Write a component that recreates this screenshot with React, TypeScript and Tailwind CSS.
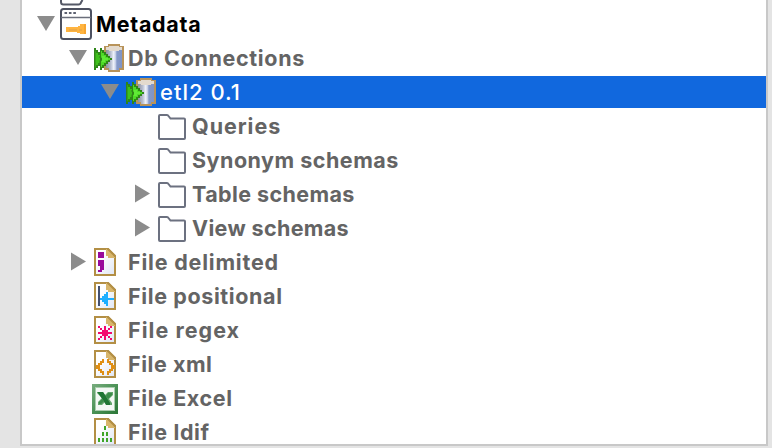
import type { ReactNode } from "react";

type Arrow = "down" | "right" | null;

function Twisty({ dir }: { dir: Arrow }) {
  return (
    <svg className="h-8 w-7 shrink-0" viewBox="0 0 28 32">
      {dir === "down" && <path d="M5 8h18l-9 15z" fill="#8c8c8c" />}
      {dir === "right" && <path d="M7 6.500v18l15-9z" fill="#8c8c8c" />}
    </svg>
  );
}

function Icon({ children }: { children: ReactNode }) {
  return (
    <svg className="h-8 w-8 shrink-0" viewBox="0 0 32 32">
      {children}
    </svg>
  );
}

function MetadataIcon() {
  return (
    <Icon>
      <rect x="1" y="1" width="30" height="30" rx="2.5" fill="#fff" stroke="#4d5160" strokeWidth="2" />
      <path d="M1 9.500h30" stroke="#6a6e7b" strokeWidth="1.5" />
      <path d="M4.500 5h12" stroke="#5d6170" strokeWidth="2" strokeDasharray="2.6 1.8" />
      <path d="M6 19h12v-1h2v-2h6v10h-6v-1h-3v-1H6z" fill="#ffb440" />
      <path d="M9 22h8M19 22h3" stroke="#dda04a" strokeWidth="1" />
      <path d="M25 16v10" stroke="#f7a530" strokeWidth="2" />
    </Icon>
  );
}

function DbIcon() {
  return (
    <Icon>
      <defs>
        <linearGradient id="cyl" x1="0" x2="1">
          <stop offset="0" stopColor="#8b8f9c" />
          <stop offset="0.3" stopColor="#b9c0d2" />
          <stop offset="0.48" stopColor="#f0f3fa" />
          <stop offset="0.6" stopColor="#c3cde6" />
          <stop offset="0.68" stopColor="#8599c8" />
          <stop offset="1" stopColor="#8094c4" />
        </linearGradient>
      </defs>
      <path d="M12 4h4V2h12v2h4v24h-4v2H16v-2h-4z" fill="#b8935a" />
      <path d="M14 7h16v19h-3v2H17v-2h-3z" fill="url(#cyl)" />
      <path d="M14 5h3V4h10v1h3v3h-3v1H17V8h-3z" fill="#e3dace" />
      <path
        d="M2 6h2v2h2v2h2V6h2v2h2v2h2v2h2v2h2v2h2v2h-2v2h-2v2h-2v2h-2v2h-2v2H8v-4H6v2H4v2H2z"
        fill="#2f8618"
      />
      <path d="M3.500 9H4v2h2v2h2v8H6v2H4v2h-.5z" fill="#3fc01c" />
      <path d="M9 9h1v2h2v2h2v2h2v1h2v2h-2v1h-2v2h-2v2h-2v2H9z" fill="#4edb26" />
      <path d="M8 14v2h1.500v2.500H8V21" fill="none" stroke="#2f8618" strokeWidth="1" />
      <path d="M10 14h3v2h3v2h-3v2h-3z" fill="#60ea36" />
    </Icon>
  );
}

function FolderIcon() {
  return (
    <Icon>
      <path d="M3 6q0-1 1-1h7q1 0 1.500 1l2 2.500H28q1 0 1 1V28q0 1-1 1H4q-1 0-1-1z" fill="#fff" stroke="#6c7180" strokeWidth="2" />
    </Icon>
  );
}

function Doc({ children }: { children: ReactNode }) {
  return (
    <Icon>
      <defs>
        <linearGradient id="paper" x1="0" y1="0" x2="1" y2="1">
          <stop offset="0.3" stopColor="#fff" />
          <stop offset="1" stopColor="#dfe6f5" />
        </linearGradient>
      </defs>
      <path d="M3 3h13l7 7v19H3z" fill="url(#paper)" stroke="#b38f45" strokeWidth="2" />
      <path d="M14 3h2l7 7v2h-7v-2h-2z" fill="#d8b66c" />
      <path d="M15 3h1l7 7v1" fill="none" stroke="#b38f45" strokeWidth="2" />
      {children}
    </Icon>
  );
}

function DelimitedIcon() {
  return (
    <Doc>
      <path d="M6 6h6v6H6zM6 14h6v10h-2v2H6v-2h2v-4H6z" fill="#990b9b" />
    </Doc>
  );
}

function PositionalIcon() {
  return (
    <Doc>
      <path d="M6 6h2v20H6z" fill="#44506e" />
      <path d="M8 18h2v-2h2v-2h2v-2h2v6h6v2h-6v6h-2v-2h-2v-2h-2v-2H8z" fill="#1eafff" />
    </Doc>
  );
}

function RegexIcon() {
  return (
    <Doc>
      <path
        d="M12 12h2v4h2v2h4v2h-4v2h-2v4h-2v-4h-2v-2H6v-2h4v-2h2zM6 12h2v2H6zM8 14h2v2H8zM18 12h2v2h-2zM16 14h2v2h-2zM6 24h2v2H6zM8 22h2v2H8zM16 22h2v2h-2zM18 24h2v2h-2z"
        fill="#f3086e"
      />
      <path d="M10 16h6v6h-6z" fill="#f3086e" />
    </Doc>
  );
}

function XmlIcon() {
  return (
    <Doc>
      <path
        d="M12 12h-1v2H9v2H7v2H5v2h2v2h2v2h2v2h1M15 12h1v2h2v2h2v2h2v2h-2v2h-2v2h-2v2h-1"
        fill="none"
        stroke="#e08f14"
        strokeWidth="2"
      />
    </Doc>
  );
}

function ExcelIcon() {
  return (
    <Icon>
      <defs>
        <linearGradient id="xlsFrame" x1="0" y1="0" x2="1" y2="1">
          <stop offset="0" stopColor="#79ad7f" />
          <stop offset="0.5" stopColor="#4b9256" />
          <stop offset="1" stopColor="#2b7637" />
        </linearGradient>
      </defs>
      <rect x="0" y="2" width="26" height="30" fill="url(#xlsFrame)" />
      <rect x="3" y="5" width="20" height="24" fill="#a9ccad" />
      <rect x="4" y="6" width="18" height="22" fill="#f4f8f5" />
      <path d="M5 10h6l2 3 3-3h5v3l-4 4 3 4v2h-5l-2-3-3 3H6v-3l4-4-5-5z" fill="#62a56b" />
      <path d="M6 10h5l2 3 5 8v2h-4l-3-5-5-7z" fill="#207534" />
      <path d="M16 11h4v2l-4 4-2-3zM7 20l3-3 2 2-3 3H7z" fill="#3c8c4a" />
    </Icon>
  );
}

function LdifIcon() {
  return (
    <Doc>
      <path
        d="M12 10h2v4h-2zM10 16h2v4h-2zM14 16h2v4h-2zM6 22h2v4H6zM10 22h2v4h-2zM14 22h2v4h-2zM18 22h2v4h-2z"
        fill="#3fa528"
      />
    </Doc>
  );
}

interface Node {
  label: string;
  icon: ReactNode;
  arrow: Arrow;
  indent: string;
  text: string;
  selected?: boolean;
}

const nodes: Node[] = [
  { label: "Metadata", icon: <MetadataIcon />, arrow: "down", indent: "pl-[10px]", text: "text-[21.5px] font-bold text-black tracking-[0.7px]" },
  { label: "Db Connections", icon: <DbIcon />, arrow: "down", indent: "pl-[42px]", text: "text-[21.5px] font-bold text-[#646464] tracking-[0.65px]" },
  { label: "etl2 0.1", icon: <DbIcon />, arrow: "down", indent: "pl-[74px]", text: "text-[22px] font-medium text-white tracking-[1px]", selected: true },
  { label: "Queries", icon: <FolderIcon />, arrow: null, indent: "pl-[106px]", text: "text-[21.5px] font-bold text-[#646464] tracking-[0.95px]" },
  { label: "Synonym schemas", icon: <FolderIcon />, arrow: null, indent: "pl-[106px]", text: "text-[21.5px] font-bold text-[#646464] tracking-[0.5px]" },
  { label: "Table schemas", icon: <FolderIcon />, arrow: "right", indent: "pl-[106px]", text: "text-[21.5px] font-bold text-[#646464] tracking-[0.4px]" },
  { label: "View schemas", icon: <FolderIcon />, arrow: "right", indent: "pl-[106px]", text: "text-[21.5px] font-bold text-[#646464] tracking-[0.35px]" },
  { label: "File delimited", icon: <DelimitedIcon />, arrow: "right", indent: "pl-[42px]", text: "text-[21.5px] font-bold text-[#646464] tracking-[0.8px]" },
  { label: "File positional", icon: <PositionalIcon />, arrow: null, indent: "pl-[42px]", text: "text-[21.5px] font-bold text-[#646464] tracking-[0.62px]" },
  { label: "File regex", icon: <RegexIcon />, arrow: null, indent: "pl-[42px]", text: "text-[21.5px] font-bold text-[#646464] tracking-[1.05px]" },
  { label: "File xml", icon: <XmlIcon />, arrow: null, indent: "pl-[42px]", text: "text-[21.5px] font-bold text-[#646464] tracking-[0.55px]" },
  { label: "File Excel", icon: <ExcelIcon />, arrow: null, indent: "pl-[42px]", text: "text-[21.5px] font-bold text-[#646464] tracking-[0.6px]" },
  { label: "File ldif", icon: <LdifIcon />, arrow: null, indent: "pl-[42px]", text: "text-[21.5px] font-bold text-[#646464] tracking-[0.65px]" },
];

export default function App() {
  return (
    <div className="h-[448px] w-[772px] overflow-hidden bg-[#e4e4e4] pl-5 font-['Inter','Liberation_Sans',sans-serif]">
      <div className="h-[446px] w-[748px] overflow-hidden border-x-2 border-b-2 border-[#c8c8c8] bg-white">
        <div className="h-[7px] pl-[38px]">
          <svg className="h-[7px] w-8" viewBox="0 0 32 7">
            <path d="M1 0v2q0 2.500 2.500 2.500h15q2 0 2.500-2L22.500 0" fill="#fff" stroke="#555967" strokeWidth="2" />
          </svg>
        </div>
        {nodes.map((n) => (
          <div key={n.label} className="h-[34px] py-px">
            <div className={`flex h-8 items-center ${n.indent} ${n.selected ? "bg-[#1168de]" : ""}`}>
              <Twisty dir={n.arrow} />
              {n.icon}
              <span className={`ml-1 whitespace-nowrap leading-8 ${n.text}`}>{n.label}</span>
            </div>
          </div>
        ))}
      </div>
    </div>
  );
}
